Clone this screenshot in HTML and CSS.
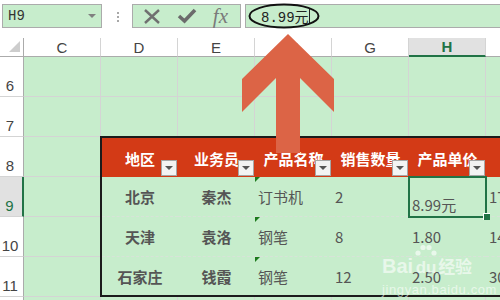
FILE: index.html
```
<!DOCTYPE html>
<html lang="zh">
<head>
    <meta charset="UTF-8">
    <title>H9 - 产品单价</title>
    <link rel="stylesheet" href="styles.css">
</head>
<body>
    <div class="toolbar">
        <div class="namebox"><span>H9</span><span class="caret"></span></div>
        <div class="grip"><i></i><i></i><i></i></div>
        <div class="fnbox">
            <svg class="ico" width="18" height="17" viewBox="0 0 18 17"><path d="M2 2 L16 15 M16 2 L2 15" stroke="#707070" stroke-width="2.4" fill="none"/></svg>
            <svg class="ico" width="20" height="16" viewBox="0 0 20 16"><path d="M2 8 L7.5 13 L18 2" stroke="#6b6b6b" stroke-width="3.6" fill="none"/></svg>
            <span class="fx">fx</span>
        </div>
        <div class="formula">
            <span>8.99元</span><span class="cursor"></span>
            <svg class="ring" width="72" height="26" viewBox="0 0 72 26"><ellipse cx="36" cy="13" rx="34.5" ry="11.5" fill="none" stroke="#111" stroke-width="2"/></svg>
        </div>
    </div>

    <div class="sheet">
        <div class="corner"></div>
        <div class="colhead">C</div>
        <div class="colhead">D</div>
        <div class="colhead">E</div>
        <div class="colhead">F</div>
        <div class="colhead">G</div>
        <div class="colhead on">H</div>
        <div class="colhead last"></div>

        <div class="rowhead">6</div>
        <div class="cell"></div><div class="cell"></div><div class="cell"></div><div class="cell"></div><div class="cell"></div><div class="cell"></div><div class="cell last"></div>
        <div class="rowhead">7</div>
        <div class="cell"></div><div class="cell"></div><div class="cell"></div><div class="cell"></div><div class="cell"></div><div class="cell"></div><div class="cell last"></div>
        <div class="rowhead">8</div><div class="cell"></div>
        <div class="rowhead on">9</div><div class="cell"></div>
        <div class="rowhead">10</div><div class="cell"></div>
        <div class="rowhead">11</div><div class="cell"></div>
        <div class="rowhead"></div>
        <div class="cell"></div><div class="cell"></div><div class="cell"></div><div class="cell"></div><div class="cell"></div><div class="cell"></div><div class="cell last"></div>

        <div class="table">
            <div class="th">地区<span class="filter"></span></div>
            <div class="th">业务员<span class="filter"></span></div>
            <div class="th">产品名称<span class="filter"></span></div>
            <div class="th">销售数量<span class="filter"></span></div>
            <div class="th">产品单价<span class="filter"></span></div>
            <div class="th"></div>

            <div class="td c">北京</div>
            <div class="td c">秦杰</div>
            <div class="td tag">订书机</div>
            <div class="td">2</div>
            <div class="td active">8.99元</div>
            <div class="td">17.98</div>

            <div class="td c">天津</div>
            <div class="td c">袁洛</div>
            <div class="td tag">钢笔</div>
            <div class="td">8</div>
            <div class="td">1.80</div>
            <div class="td">14.40</div>

            <div class="td c end">石家庄</div>
            <div class="td c end">钱霞</div>
            <div class="td tag end">钢笔</div>
            <div class="td end">12</div>
            <div class="td end">2.50</div>
            <div class="td end">30.00</div>
        </div>
    </div>

    <svg class="arrow" width="92" height="119" viewBox="0 0 92 119">
        <polygon points="46,0 92,45 92,78 58,44 58,119 34,119 34,44 0,78 0,45" fill="#dc6446"/>
    </svg>

    <div class="watermark">
        <div class="wm-logo">
            <span>Bai</span>
            <span class="paw">
                <svg width="22" height="16" viewBox="0 0 22 16"><circle cx="3" cy="9" r="2.6"/><circle cx="8" cy="3.5" r="2.6"/><circle cx="14" cy="3.5" r="2.6"/><circle cx="19" cy="9" r="2.6"/></svg>
                du
            </span>
            <span class="wm-cn">经验</span>
        </div>
        <div class="wm-url">jingyan.baidu.com</div>
    </div>
</body>
</html>
```

FILE: styles.css
```
* {
    box-sizing: border-box;
}

body {
    margin: 0;
    width: 500px;
    height: 300px;
    overflow: hidden;
    position: relative;
    background: #fff;
    font-family: "Noto Sans CJK SC", sans-serif;
}

/* formula bar */
.toolbar {
    height: 38px;
    display: flex;
    align-items: flex-start;
    padding: 4px 0 0 2px;
}

.namebox {
    width: 100px;
    height: 24px;
    border: 1px solid #ababab;
    background: #c7edcc;
    display: flex;
    align-items: center;
    justify-content: space-between;
    padding: 0 5px 0 5px;
    font-family: "Liberation Mono", monospace;
    font-size: 14px;
    color: #333;
}

.caret {
    border-left: 4px solid transparent;
    border-right: 4px solid transparent;
    border-top: 4px solid #808080;
}

.grip {
    display: flex;
    flex-direction: column;
    gap: 2px;
    margin: 8px 13px 0 15px;
}

.grip i {
    display: block;
    width: 2px;
    height: 2px;
    background: #a8a8a8;
}

.fnbox {
    width: 109px;
    height: 24px;
    border: 1px solid #ababab;
    background: #c7edcc;
    display: flex;
    align-items: center;
    justify-content: space-around;
    padding: 0 4px 0 2px;
}

.ico {
    display: block;
}

.fx {
    font-family: "Liberation Serif", serif;
    font-style: italic;
    font-size: 21px;
    line-height: 22px;
    color: #7a7a7a;
}

.formula {
    flex: 1;
    height: 24px;
    margin-left: 4px;
    border: 1px solid #ababab;
    border-right: 0;
    background: #c7edcc;
    position: relative;
    display: flex;
    align-items: center;
    padding-left: 15px;
    font-family: "Liberation Mono", "Noto Sans CJK SC", monospace;
    font-size: 14px;
    color: #222;
}

.cursor {
    width: 1px;
    height: 15px;
    background: #222;
}

.ring {
    position: absolute;
    left: 2px;
    top: -2px;
}

/* sheet grid */
.sheet {
    display: grid;
    grid-template-columns: 24px repeat(6, 77px) 1fr;
    grid-template-rows: 19px repeat(7, 40px);
    background: #c7edcc;
}

.corner {
    position: relative;
    background: #fff;
    border-right: 1px solid #ababab;
    border-bottom: 1px solid #ababab;
}

.corner::after {
    content: "";
    position: absolute;
    right: 3px;
    bottom: 4px;
    border-left: 11px solid transparent;
    border-bottom: 11px solid #cdcdcd;
}

.colhead {
    background: #fff;
    border-right: 1px solid #d4d4d4;
    border-bottom: 1px solid #ababab;
    display: flex;
    align-items: center;
    justify-content: center;
    font-family: "Liberation Sans", sans-serif;
    font-size: 15px;
    color: #444;
}

.colhead.on {
    background: #e1e1e1;
    border-bottom: 2px solid #217346;
    color: #217346;
    font-weight: bold;
}

.rowhead {
    background: #fff;
    border-right: 1px solid #ababab;
    border-bottom: 1px solid #d4d4d4;
    display: flex;
    align-items: flex-end;
    justify-content: center;
    padding: 0 3px 3px 0;
    font-family: "Liberation Sans", sans-serif;
    font-size: 15px;
    line-height: 1;
    color: #444;
}

.rowhead.on {
    background: #e1e1e1;
    border-right: 2px solid #217346;
    color: #217346;
}

.cell {
    border-right: 1px solid #d4d4d4;
    border-bottom: 1px solid #d4d4d4;
}

.last {
    border-right: 0;
}

/* the list */
.table {
    grid-column: 3 / -1;
    grid-row: 4 / 8;
    margin: -1px 0 0 -1px;
    border: 2px solid #1b1b1b;
    border-right: 0;
    background: #c7edcc;
    display: grid;
    grid-template-columns: 76px repeat(4, 77px) 1fr;
    grid-template-rows: 39px 40px 40px 1fr;
    position: relative;
    z-index: 1;
}

.th {
    position: relative;
    background: #d33a16;
    color: #fff;
    font-weight: bold;
    font-size: 15px;
    display: flex;
    align-items: center;
    justify-content: center;
    padding-top: 1px;
}

.filter {
    position: absolute;
    right: 1px;
    bottom: 1px;
    width: 16px;
    height: 16px;
    border: 1px solid #a6a6a6;
    background: #f3f3f3;
    display: flex;
    align-items: center;
    justify-content: center;
}

.filter::after {
    content: "";
    border-left: 4px solid transparent;
    border-right: 4px solid transparent;
    border-top: 4px solid #555;
}

.td {
    position: relative;
    display: flex;
    align-items: center;
    padding-left: 3px;
    font-size: 15px;
    color: #555;
    white-space: nowrap;
    overflow: hidden;
    border-bottom: 1px dashed #d7e3d8;
}

.td.end {
    border-bottom: 0;
}

.td.c {
    justify-content: center;
    padding-left: 0;
    font-weight: bold;
}

.td.tag::before {
    content: "";
    position: absolute;
    top: 0;
    left: 0;
    border-top: 5px solid #1d7a1d;
    border-right: 5px solid transparent;
}

.td.active {
    overflow: visible;
    align-items: flex-end;
    padding-bottom: 1px;
    outline: 2px solid #217346;
    outline-offset: -1px;
    z-index: 2;
}

.td.active::after {
    content: "";
    position: absolute;
    right: -4px;
    bottom: -4px;
    width: 6px;
    height: 6px;
    background: #217346;
    border-left: 1px solid #fff;
    border-top: 1px solid #fff;
}

/* overlays */
.arrow {
    position: absolute;
    left: 242px;
    top: 34px;
    z-index: 3;
}

.watermark {
    position: absolute;
    left: 382px;
    top: 244px;
    z-index: 4;
    color: rgba(255, 255, 255, 0.6);
}

.wm-logo {
    display: flex;
    align-items: flex-end;
    font-family: "Liberation Sans", sans-serif;
    font-size: 20px;
    font-weight: bold;
    line-height: 20px;
}

.paw {
    display: flex;
    flex-direction: column;
    align-items: center;
    margin-left: 2px;
    font-size: 17px;
    line-height: 16px;
}

.paw svg {
    fill: rgba(255, 255, 255, 0.6);
    display: block;
}

.wm-cn {
    font-family: "Noto Sans CJK SC", sans-serif;
    font-size: 17px;
    margin-left: 1px;
}

.wm-url {
    margin-top: 6px;
    font-family: "Liberation Sans", sans-serif;
    font-size: 13px;
    letter-spacing: 0.6px;
}
```
